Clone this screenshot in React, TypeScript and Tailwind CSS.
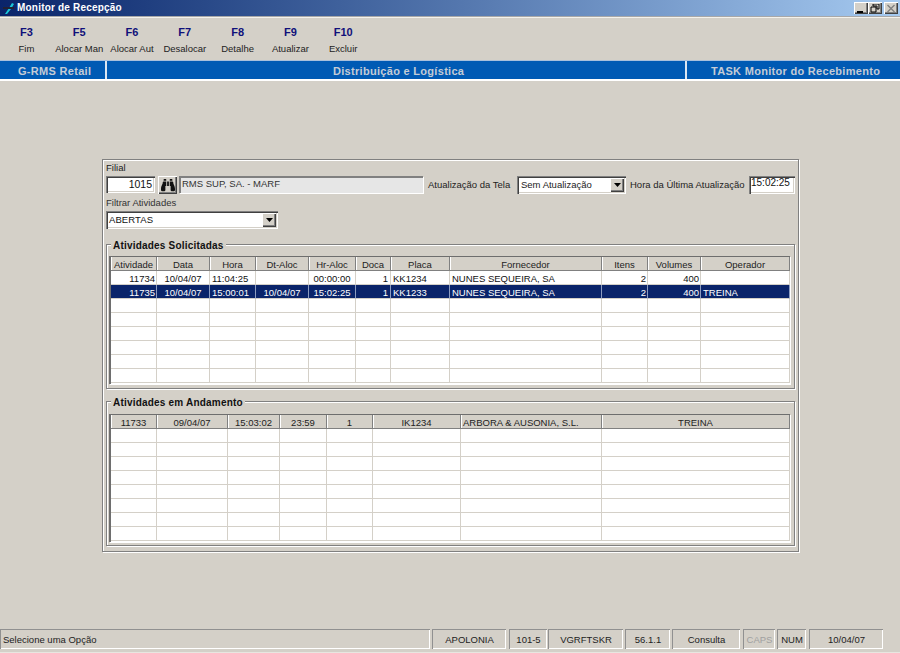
import { FaBinoculars } from "react-icons/fa";

const shortcuts = [
  { key: "F3", label: "Fim" },
  { key: "F5", label: "Alocar Man" },
  { key: "F6", label: "Alocar Aut" },
  { key: "F7", label: "Desalocar" },
  { key: "F8", label: "Detalhe" },
  { key: "F9", label: "Atualizar" },
  { key: "F10", label: "Excluir" },
];

const sunken =
  "shadow-[inset_1px_1px_0_#808080,inset_2px_2px_0_#404040,inset_-1px_-1px_0_#ffffff,inset_-2px_-2px_0_#d4d0c8]";
const raised =
  "shadow-[inset_1px_1px_0_#ffffff,inset_-1px_-1px_0_#404040,inset_-2px_-2px_0_#808080]";
const etched = "border border-[#808080] shadow-[1px_1px_0_#ffffff,inset_1px_1px_0_#ffffff]";

const solicitadasCols = "grid-cols-[46px_53px_46px_53px_47px_35px_59px_152px_46px_53px_89px]";
const andamentoCols = "grid-cols-[46px_71px_52px_47px_46px_88px_141px_188px]";

const solicitadasAlign = [
  "text-right pr-[1px]",
  "text-center",
  "text-left pl-[2px]",
  "text-center",
  "text-center",
  "text-right pr-[2px]",
  "text-left pl-[2px]",
  "text-left pl-[2px]",
  "text-right pr-[1px]",
  "text-right pr-[1px]",
  "text-left pl-[2px]",
];

const solicitadasHead = ["Atividade", "Data", "Hora", "Dt-Aloc", "Hr-Aloc", "Doca", "Placa", "Fornecedor", "Itens", "Volumes", "Operador"];
const solicitadasRows = [
  ["11734", "10/04/07", "11:04:25", "", "00:00:00", "1", "KK1234", "NUNES SEQUEIRA, SA", "2", "400", ""],
  ["11735", "10/04/07", "15:00:01", "10/04/07", "15:02:25", "1", "KK1233", "NUNES SEQUEIRA, SA", "2", "400", "TREINA"],
];
const andamentoHead = ["11733", "09/04/07", "15:03:02", "23:59", "1", "IK1234", "ARBORA & AUSONIA, S.L.", "TREINA"];

const statusPanels = [
  { text: "APOLONIA", width: "w-[74px]", gap: "ml-[2px]" },
  { text: "101-5", width: "w-[38px]", gap: "ml-[3px]" },
  { text: "VGRFTSKR", width: "w-[75px]", gap: "ml-[1px]" },
  { text: "56.1.1", width: "w-[45px]", gap: "ml-[2px]" },
  { text: "Consulta", width: "w-[68px]", gap: "ml-[2px]" },
  { text: "CAPS", width: "w-[32px]", gap: "ml-[3px]", muted: true },
  { text: "NUM", width: "w-[29px]", gap: "ml-[2px]" },
  { text: "10/04/07", width: "w-[74px]", gap: "ml-[3px]" },
];

function ComboArrow() {
  return (
    <div className={`flex h-[14px] w-[14px] shrink-0 items-center justify-center bg-[#d4d0c8] ${raised}`}>
      <svg width="7" height="4" viewBox="0 0 7 4">
        <path d="M0 0h7L3.5 4z" fill="#000" />
      </svg>
    </div>
  );
}

function WindowButton({ children }: { children: React.ReactNode }) {
  return (
    <div className={`flex h-[12px] w-[14px] items-center justify-center bg-[#d4d0c8] ${raised}`}>
      <svg width="10" height="9" viewBox="0 0 10 9">
        {children}
      </svg>
    </div>
  );
}

function GroupBox({ title, pad, children }: { title: string; pad: string; children: React.ReactNode }) {
  return (
    <div className={`relative h-[145px] w-[689px] ${etched} ${pad} pl-[2px]`}>
      <span className="absolute -top-[6px] left-[4px] bg-[#d4d0c8] px-[2px] text-[10px] leading-[13px] font-bold tracking-[0.2px] text-[#111]">
        {title}
      </span>
      {children}
    </div>
  );
}

function Grid({ cols, head, headAlign, rows, align }: {
  cols: string;
  head: string[];
  headAlign?: string[];
  rows: string[][];
  align: string[];
}) {
  return (
    <div className="h-[128px] w-[681px] border-t border-l-2 border-t-[#6e6e6e] border-l-[#6e6e6e] bg-white shadow-[1px_1px_0_#ffffff]">
      <div className={`grid h-[14px] ${cols}`}>
        {head.map((text, i) => (
          <div
            key={i}
            className={`truncate border-r border-b border-r-[#808080] border-b-[#808080] bg-[#d4d0c8] text-[9.5px] leading-[15px] text-[#222] shadow-[inset_1px_0_0_#ffffff] ${headAlign ? headAlign[i] : "text-center"}`}
          >
            {text}
          </div>
        ))}
      </div>
      {rows.map((row, r) => {
        const selected = r === 1 && row[0] !== "";
        return (
          <div key={r} className={`grid h-[14px] ${cols} ${selected ? "bg-[#0a246a] text-white" : "text-[#111]"}`}>
            {row.map((cell, i) => (
              <div
                key={i}
                className={`truncate border-r border-b border-[#d4d0c8] text-[9.5px] leading-[15px] ${selected ? "border-r-[#8c9cc0]" : ""} ${align[i]}`}
              >
                {cell}
              </div>
            ))}
          </div>
        );
      })}
    </div>
  );
}

export default function App() {
  const blank = (n: number) => Array.from({ length: n }, () => "");
  return (
    <div className="flex h-[653px] w-[900px] flex-col overflow-hidden bg-[#d4d0c8] font-['Liberation_Sans',Arial,sans-serif]">
      {/* barra de título */}
      <div className="flex h-[16px] shrink-0 items-center justify-between bg-gradient-to-r from-[#0a246a] to-[#a6caf0] pr-[2px] pl-[2px]">
        <div className="flex items-center gap-[1px]">
          <svg width="14" height="14" viewBox="0 0 14 14">
            <path d="M3 13 L7 7 L10 2 L12 3 L9 8 L5 13z" fill="#19c8d8" />
            <rect x="1" y="6" width="11" height="2" fill="#223" />
          </svg>
          <span className="text-[10px] leading-none font-bold tracking-[0.2px] text-white">Monitor de Recepção</span>
        </div>
        <div className="flex items-center">
          <WindowButton>
            <rect x="1" y="7" width="6" height="2" fill="#000" />
          </WindowButton>
          <WindowButton>
            <path d="M3 0h6v5H7V2H3zM1 3h5v5H1z" fill="none" stroke="#000" />
          </WindowButton>
          <div className="ml-[2px]">
            <WindowButton>
              <path d="M1.5 1 L8.5 8 M8.5 1 L1.5 8" stroke="#808080" strokeWidth="1.4" />
            </WindowButton>
          </div>
        </div>
      </div>
      <div className="h-[2px] shrink-0 border-t border-t-[#a8a8a8] border-b border-b-[#f4f2ec]" />

      {/* atalhos */}
      <div className="flex h-[42px] shrink-0 pt-[8px]">
        {shortcuts.map((s) => (
          <div key={s.key} className="flex w-[52.8px] flex-col items-center">
            <span className="text-[11px] leading-[12px] font-bold text-[#10107a]">{s.key}</span>
            <span className="mt-[5px] text-[9.5px] leading-[12px] text-[#222]">{s.label}</span>
          </div>
        ))}
      </div>

      {/* faixa azul */}
      <div className="flex h-[21px] shrink-0 border-t border-b-2 border-t-[#a8c0dc] border-b-white bg-[#005ab4] text-[11px] leading-[20px] font-bold tracking-[0.3px] text-[#c4ccd6]">
        <div className="w-[107px] shrink-0 border-r-2 border-r-[#dbe6f2] pl-[18px]">G-RMS Retail</div>
        <div className="w-[580px] shrink-0 border-r-2 border-r-[#dbe6f2] pl-[226px]">Distribuição e Logística</div>
        <div className="flex-1 pl-[24px]">TASK Monitor do Recebimento</div>
      </div>

      {/* painel principal */}
      <div className={`mt-[78px] ml-[102px] h-[393px] w-[697px] shrink-0 ${etched} pl-[3px]`}>
        <div className="h-[16px] pt-[2px] text-[9.5px] leading-[12px] text-[#222]">Filial</div>
        <div className="flex h-[18px] items-start text-[9.5px] text-[#111]">
          <div className={`h-[17px] w-[49px] bg-white pr-[3px] text-right text-[10.5px] leading-[17px] ${sunken}`}>1015</div>
          <div className={`ml-[3px] flex h-[18px] w-[19px] items-center justify-center bg-[#d4d0c8] ${raised}`}>
            <FaBinoculars size={14} color="#111" />
          </div>
          <div className="ml-[2px] h-[17px] w-[244px] border-t-2 border-l-2 border-t-[#808080] border-l-[#808080] bg-[#e6e6e6] pl-[1px] leading-[12px] text-[#333] shadow-[1px_1px_0_#ffffff]">
            RMS SUP, SA. - MARF
          </div>
          <span className="ml-[5px] w-[89px] shrink-0 pt-[3px] leading-[12px] whitespace-nowrap text-[#222]">Atualização da Tela</span>
          <div className={`flex h-[18px] w-[109px] items-center justify-between bg-white pr-[2px] pl-[4px] ${sunken}`}>
            <span className="text-[#222]">Sem Atualização</span>
            <ComboArrow />
          </div>
          <span className="ml-[4px] w-[119px] shrink-0 pt-[3px] leading-[12px] whitespace-nowrap text-[#222]">Hora da Última Atualização</span>
          <div className={`h-[18px] w-[46px] bg-white pl-[2px] text-[10px] leading-[14px] ${sunken}`}>15:02:25</div>
        </div>
        <div className="h-[17px] pt-[3px] text-[9.5px] leading-[12px] text-[#333]">Filtrar Atividades</div>
        <div className={`flex h-[18px] w-[172px] items-center justify-between bg-white pr-[2px] pl-[3px] ${sunken}`}>
          <span className="text-[9.5px] tracking-[0.1px] text-[#111]">ABERTAS</span>
          <ComboArrow />
        </div>

        <div className="mt-[15px]">
          <GroupBox title="Atividades Solicitadas" pad="pt-[11px]">
            <Grid
              cols={solicitadasCols}
              head={solicitadasHead}
              rows={[...solicitadasRows, ...Array.from({ length: 6 }, () => blank(11))]}
              align={solicitadasAlign}
            />
          </GroupBox>
        </div>
        <div className="mt-[12px]">
          <GroupBox title="Atividades em Andamento" pad="pt-[12px]">
            <Grid
              cols={andamentoCols}
              head={andamentoHead}
              headAlign={["text-center", "text-center", "text-center", "text-center", "text-center", "text-center", "text-left pl-[2px]", "text-center"]}
              rows={Array.from({ length: 8 }, () => blank(8))}
              align={Array.from({ length: 8 }, () => "text-left")}
            />
          </GroupBox>
        </div>
      </div>

      {/* barra de status */}
      <div className="mt-auto h-[24px] shrink-0 border-b border-b-[#e8e6e0]">
        <div className="flex h-[21px] text-[9.5px] leading-[19px] text-[#222]">
          <div className="h-[20px] w-[430px] border-t border-l border-t-[#909090] border-l-[#909090] pl-[2px] shadow-[inset_-1px_-1px_0_#ffffff]">
            Selecione uma Opção
          </div>
          {statusPanels.map((p) => (
            <div
              key={p.text}
              className={`h-[20px] ${p.width} ${p.gap} border-t border-l border-t-[#909090] border-l-[#909090] text-center shadow-[inset_-1px_-1px_0_#ffffff] ${p.muted ? "text-[#a0a0a0]" : ""}`}
            >
              {p.text}
            </div>
          ))}
        </div>
      </div>
    </div>
  );
}
